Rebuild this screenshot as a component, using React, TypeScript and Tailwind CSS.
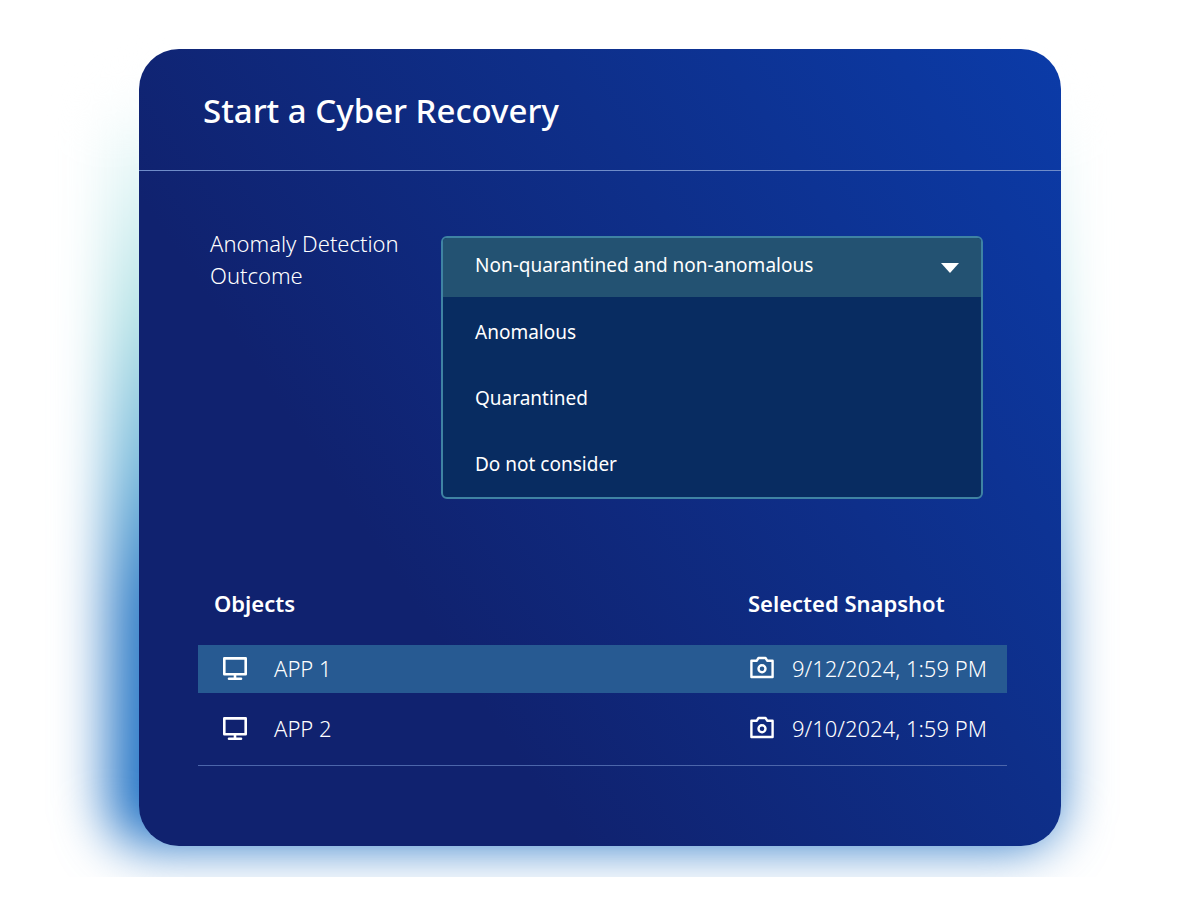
import { useState } from 'react';

const OUTCOMES = [
  'Non-quarantined and non-anomalous',
  'Anomalous',
  'Quarantined',
  'Do not consider',
];

const OBJECTS = [
  { name: 'APP 1', snapshot: '9/12/2024, 1:59 PM' },
  { name: 'APP 2', snapshot: '9/10/2024, 1:59 PM' },
];

function MonitorIcon() {
  return (
    <svg
      viewBox="0 0 26 26"
      className="w-[26px] h-[26px]"
      fill="none"
      stroke="currentColor"
      strokeWidth="2.6"
      strokeLinecap="round"
      strokeLinejoin="round"
      aria-hidden="true"
    >
      <path d="M2.3 3.4h21.4v15.8H2.3z" />
      <path d="M13 19.4v4" />
      <path d="M7 23.8h12" />
    </svg>
  );
}

function CameraIcon() {
  return (
    <svg
      viewBox="0 0 24 24"
      className="w-6 h-6"
      fill="none"
      stroke="currentColor"
      strokeWidth="2.4"
      strokeLinejoin="round"
      aria-hidden="true"
    >
      <path d="M1.4 4.8h5.2l1.9-2.8h7l1.9 2.8h5.2v16.2H1.4z" />
      <circle cx="12" cy="12.8" r="3.5" />
    </svg>
  );
}

export default function App() {
  const [outcome, setOutcome] = useState(OUTCOMES[0]);
  const [selectedObject, setSelectedObject] = useState('APP 1');

  return (
    <div className="min-h-screen bg-white font-['Noto_Sans',sans-serif] text-white">
      <div className="relative isolate overflow-hidden px-[139px] pt-[49px] pb-[31px]">
        {/* Glow */}
        <div className="absolute -z-10 top-[90px] bottom-[31px] left-[107px] right-[142px] rounded-[40px] blur-[26px] bg-[linear-gradient(180deg,#ffffff_0%,#e6f7f7_10%,#b4e2e6_30%,#78b9db_50%,#3781c8_68%,#2474c6_100%)]" />

        <main className="rounded-[40px] overflow-hidden bg-[linear-gradient(56deg,#10226f_30%,#0e2f8a_65%,#0b3ba8_100%)]">
          {/* Header */}
          <header className="px-16 pt-[38px] pb-[35px] border-b border-[#6f8cc9]">
            <h1 className="text-[33px] leading-[48px] font-medium">Start a Cyber Recovery</h1>
          </header>

          {/* Outcome */}
          <section className="flex items-start pt-14 pl-[71px] pr-[78px]">
            <label htmlFor="outcome" className="w-[231px] pr-8 text-[22px] leading-8 font-light">
              Anomaly Detection Outcome
            </label>
            <div className="flex-1 mt-[9px] border-2 border-[#3f83a3] rounded-md overflow-hidden bg-[#082c61] text-[19px]">
              <div className="relative">
                <select
                  id="outcome"
                  value={outcome}
                  onChange={(e) => setOutcome(e.target.value)}
                  className="block w-full h-[59px] pl-8 pr-16 pb-1 appearance-none bg-[#235272] outline-none"
                >
                  {OUTCOMES.map((item) => (
                    <option key={item}>{item}</option>
                  ))}
                </select>
                <svg
                  viewBox="0 0 18 10"
                  className="absolute right-[22px] top-[25px] w-[18px] h-[10px] pointer-events-none"
                  fill="currentColor"
                  aria-hidden="true"
                >
                  <path d="M0 0h18L9 10z" />
                </svg>
              </div>
              <ul className="pt-0.5">
                {OUTCOMES.filter((item) => item !== outcome).map((item) => (
                  <li key={item}>
                    <button
                      type="button"
                      onClick={() => setOutcome(item)}
                      className="block w-full h-[66px] px-8 text-left"
                    >
                      {item}
                    </button>
                  </li>
                ))}
              </ul>
            </div>
          </section>

          {/* Objects */}
          <section className="pt-20 pb-20 pl-[59px] pr-[54px]">
            <table className="w-full text-left text-[22px] leading-8">
              <thead>
                <tr className="h-[66px] align-top">
                  <th className="pl-4 pt-2 font-semibold">Objects</th>
                  <th className="w-[259px] pt-2 font-semibold">Selected Snapshot</th>
                </tr>
              </thead>
              <tbody className="font-light">
                {OBJECTS.map(({ name, snapshot }) => (
                  <tr
                    key={name}
                    onClick={() => setSelectedObject(name)}
                    className={
                      name === selectedObject
                        ? 'h-12 bg-[#275a92]'
                        : 'h-[72px] border-b border-[#4c66ab]'
                    }
                  >
                    <td className="pl-6 pb-0.5">
                      <div className="flex items-center gap-[26px]">
                        <MonitorIcon />
                        {name}
                      </div>
                    </td>
                    <td className="pl-0.5 pb-0.5">
                      <div className="flex items-center gap-[18px] whitespace-nowrap">
                        <CameraIcon />
                        {snapshot}
                      </div>
                    </td>
                  </tr>
                ))}
              </tbody>
            </table>
          </section>
        </main>
      </div>
    </div>
  );
}
